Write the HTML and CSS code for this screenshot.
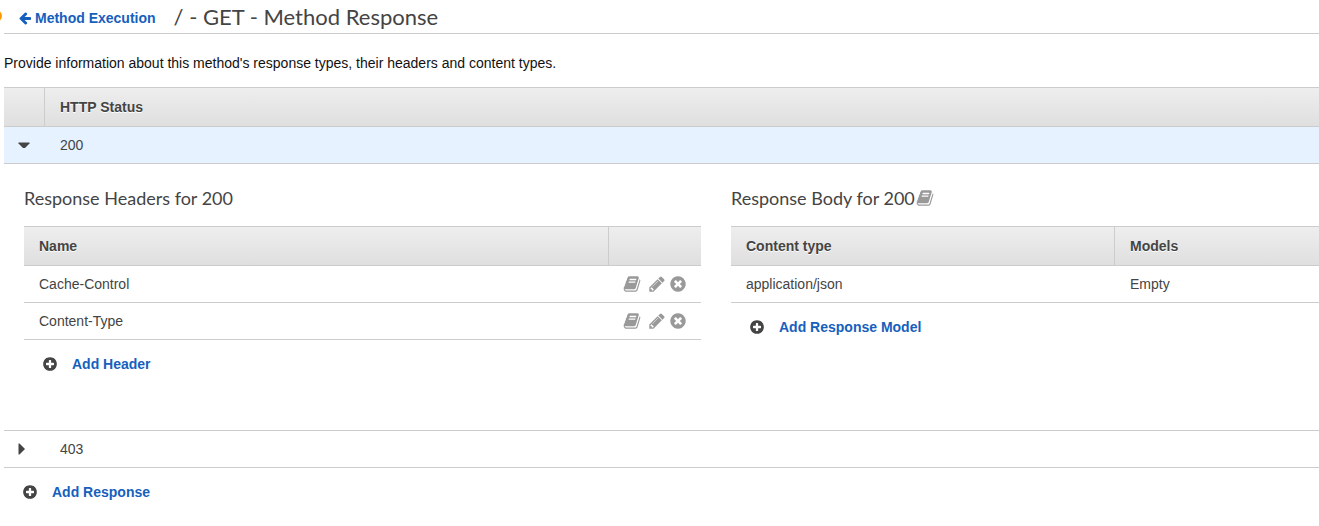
FILE: index.html
```html
<!DOCTYPE html>
<html lang="en">
<head>
<meta charset="utf-8">
<title>Method Response</title>
<link rel="stylesheet" href="styles.css">
</head>
<body>
<svg class="sprite" aria-hidden="true">
  <symbol id="arrow-left" viewBox="0 0 1792 1792"><path d="M1664 896v128q0 53-32.500 90.500t-84.500 37.500h-704l293 294q38 36 38 90t-38 90l-75 76q-37 37-90 37-52 0-91-37l-651-652q-37-37-37-90 0-52 37-91l651-650q38-38 91-38 52 0 90 38l75 74q38 38 38 91t-38 91l-293 293h704q52 0 84.500 37.500t32.500 90.500z"/></symbol>
  <symbol id="plus" viewBox="0 0 1792 1792"><path d="M1344 960v-128q0-26-19-45t-45-19h-256v-256q0-26-19-45t-45-19h-128q-26 0-45 19t-19 45v256h-256q-26 0-45 19t-19 45v128q0 26 19 45t45 19h256v256q0 26 19 45t45 19h128q26 0 45-19t19-45v-256h256q26 0 45-19t19-45zm320-64q0 209-103 385.500t-279.500 279.500-385.500 103-385.500-103-279.500-279.500-103-385.500 103-385.500 279.500-279.500 385.500-103 385.500 103 279.500 279.500 103 385.500z"/></symbol>
  <symbol id="remove" viewBox="0 0 1792 1792"><path d="M1277 1122q0-26-19-45l-181-181 181-181q19-19 19-45 0-27-19-46l-90-90q-19-19-46-19-26 0-45 19l-181 181-181-181q-19-19-45-19-27 0-46 19l-90 90q-19 19-19 46 0 26 19 45l181 181-181 181q-19 19-19 45 0 27 19 46l90 90q19 19 46 19 26 0 45-19l181-181 181 181q19 19 45 19 27 0 46-19l90-90q19-19 19-46zm387-226q0 209-103 385.500t-279.500 279.500-385.500 103-385.500-103-279.500-279.500-103-385.500 103-385.500 279.500-279.500 385.500-103 385.500 103 279.500 279.500 103 385.500z"/></symbol>
  <symbol id="pencil" viewBox="0 0 1792 1792"><path d="M491 1536l91-91-235-235-91 91v107h128v128h107zm523-928q0-22-22-22-10 0-17 7l-542 542q-7 7-7 17 0 22 22 22 10 0 17-7l542-542q7-7 7-17zm-54-192l416 416-832 832h-416v-416zm683 96q0 53-37 90l-166 166-416-416 166-165q36-38 90-38 53 0 91 38l235 234q37 39 37 91z"/></symbol>
  <symbol id="book" viewBox="0 0 1792 1792"><path d="M1703 478q40 57 18 129l-275 906q-19 64-76.500 107.500t-122.500 43.500h-923q-77 0-148.500-53.500t-99.500-131.500q-24-67-2-127 0-4 3-27t4-37q1-8-3-21.500t-3-19.500q2-11 8-21t16.500-23.500 16.500-23.500q23-38 45-91.500t30-91.500q3-10 .5-30t-.5-28q3-11 17-28t17-23q21-36 42-92t25-90q1-9-2.500-32t.5-28q4-13 22-30.500t22-22.500q19-26 42.500-84.500t27.500-96.500q1-8-3-25.500t-2-26.500q2-8 9-18t18-23 17-21q8-12 16.500-30.500t15-35 16-36 19.500-32 26.500-23.500 36-11.500 47.500 5.500l-1 3q38-9 51-9h761q74 0 114 56t18 130l-274 906q-36 119-71.500 153.500t-128.500 34.500h-869q-27 0-38 15-11 16-1 43 24 70 144 70h923q29 0 56-15.500t35-41.500l300-987q7-22 5-57 38 15 59 43zm-1064 2q-4 13 2 22.500t20 9.500h608q13 0 25.500-9.500t16.500-22.500l21-64q4-13-2-22.500t-20-9.500h-608q-13 0-25.500 9.500t-16.500 22.500zm-83 256q-4 13 2 22.500t20 9.500h608q13 0 25.500-9.500t16.500-22.500l21-64q4-13-2-22.500t-20-9.500h-608q-13 0-25.500 9.500t-16.500 22.500z"/></symbol>
  <symbol id="caret-down" viewBox="0 0 12 12"><path d="M.5 3.500h11v1L7 9H5L.5 4.500z"/></symbol>
  <symbol id="caret-right" viewBox="0 0 12 12"><path d="M.5.500h1L6.500 5.500v1L1.500 11.500h-1z"/></symbol>
</svg>

<main class="page">
  <header class="page-header">
    <span class="marker"></span>
    <a class="link back" href="#"><svg class="icon-arrow"><use href="#arrow-left"/></svg>Method Execution</a>
    <h1 class="title">/ - GET - Method Response</h1>
  </header>
  <p class="intro">Provide information about this method's response types, their headers and content types.</p>

  <table class="grid statuses">
    <thead>
      <tr><th class="toggle-col"></th><th>HTTP Status</th></tr>
    </thead>
    <tbody>
      <tr class="selected">
        <td class="toggle-col"><button class="toggle" aria-label="Collapse 200" aria-expanded="true"><svg class="icon-caret"><use href="#caret-down"/></svg></button></td>
        <td>200</td>
      </tr>
      <tr>
        <td class="detail" colspan="2">
          <div class="panels">
            <section>
              <h2 class="subtitle">Response Headers for 200</h2>
              <table class="grid">
                <thead><tr><th>Name</th><th class="actions-col"></th></tr></thead>
                <tbody>
                  <tr>
                    <td>Cache-Control</td>
                    <td class="actions-col"><div class="actions">
                      <button class="action" aria-label="Describe"><svg class="icon"><use href="#book"/></svg></button>
                      <button class="action edit" aria-label="Edit"><svg class="icon"><use href="#pencil"/></svg></button>
                      <button class="action" aria-label="Remove"><svg class="icon"><use href="#remove"/></svg></button>
                    </div></td>
                  </tr>
                  <tr>
                    <td>Content-Type</td>
                    <td class="actions-col"><div class="actions">
                      <button class="action" aria-label="Describe"><svg class="icon"><use href="#book"/></svg></button>
                      <button class="action edit" aria-label="Edit"><svg class="icon"><use href="#pencil"/></svg></button>
                      <button class="action" aria-label="Remove"><svg class="icon"><use href="#remove"/></svg></button>
                    </div></td>
                  </tr>
                </tbody>
              </table>
              <a class="link add" href="#"><svg class="icon-plus"><use href="#plus"/></svg>Add Header</a>
            </section>
            <section>
              <h2 class="subtitle">Response Body for 200 <button class="action" aria-label="Describe body"><svg class="icon"><use href="#book"/></svg></button></h2>
              <table class="grid">
                <thead><tr><th>Content type</th><th class="models-col">Models</th></tr></thead>
                <tbody><tr><td>application/json</td><td class="models-col">Empty</td></tr></tbody>
              </table>
              <a class="link add" href="#"><svg class="icon-plus"><use href="#plus"/></svg>Add Response Model</a>
            </section>
          </div>
        </td>
      </tr>
      <tr>
        <td class="toggle-col"><button class="toggle" aria-label="Expand 403" aria-expanded="false"><svg class="icon-caret"><use href="#caret-right"/></svg></button></td>
        <td>403</td>
      </tr>
    </tbody>
  </table>
  <a class="link add" href="#"><svg class="icon-plus"><use href="#plus"/></svg>Add Response</a>
</main>
</body>
</html>
```

FILE: styles.css
```css
* {
  box-sizing: border-box;
}

body {
  margin: 0;
  background: #fff;
  color: #444;
  font: 14px/20px "Liberation Sans", Arial, sans-serif;
  overflow-x: hidden;
}

.sprite {
  position: absolute;
  width: 0;
  height: 0;
}

svg {
  display: block;
  flex: none;
  fill: currentColor;
}

button {
  display: block;
  padding: 0;
  border: 0;
  background: none;
  color: inherit;
  cursor: pointer;
}

.page {
  padding-left: 4px;
}

.page-header {
  position: relative;
  display: flex;
  align-items: baseline;
  gap: 18px;
  height: 34px;
  padding: 3px 0 0 14px;
  border-bottom: 1px solid #ccc;
}

.marker {
  position: absolute;
  top: 10px;
  left: -14px;
  width: 12px;
  height: 12px;
  border-radius: 50%;
  background: #f90;
}

.title,
.subtitle {
  margin: 0;
  font-family: Lato, sans-serif;
  font-weight: 400;
}

.title {
  font-size: 22px;
  line-height: 28px;
}

.link {
  display: flex;
  align-items: center;
  color: #1660bd;
  font-weight: 700;
  text-decoration: none;
}

.back {
  gap: 3px;
}

.icon-arrow {
  width: 14px;
  height: 14px;
}

.intro {
  margin: 19px 0 14px;
  color: #111;
}

.grid {
  width: 100%;
  border-collapse: separate;
  border-spacing: 0;
  table-layout: fixed;
}

.grid th,
.grid td {
  padding: 8px 15px;
  border-bottom: 1px solid #ccc;
  text-align: left;
}

.grid th {
  height: 40px;
  border-top: 1px solid #ccc;
  background: linear-gradient(#eee, #dfdfdf);
  text-shadow: 0 1px 0 #fff;
}

.grid th + th {
  border-left: 1px solid #ccc;
}

.grid td:not(:first-child) {
  padding-left: 16px;
}

.statuses > tbody > tr > .toggle-col,
.statuses > thead > tr > .toggle-col {
  width: 40px;
  padding: 0 0 0 14px;
}

.selected {
  background: #e6f2ff;
}

.icon-caret {
  width: 12px;
  height: 12px;
}

.statuses > tbody > tr > .detail {
  height: 267px;
  padding: 20px 0 0 20px;
  vertical-align: top;
}

.panels {
  display: grid;
  grid-template-columns: 677fr 588fr;
  gap: 30px;
}

.subtitle {
  display: flex;
  align-items: center;
  gap: 1px;
  margin-bottom: 14px;
  font-size: 18px;
  line-height: 28px;
}

.grid .actions-col {
  width: 93px;
  padding-right: 0;
}

.grid td.actions-col {
  padding-left: 15px;
}

.grid .models-col {
  width: 205px;
}

.actions {
  display: flex;
  align-items: center;
  gap: 3px;
}

.action {
  color: #999;
}

.edit {
  margin-left: 4px;
}

.icon {
  width: 18px;
  height: 18px;
}

.icon-plus {
  width: 16px;
  height: 16px;
  color: #444;
}

.add {
  width: fit-content;
  gap: 14px;
  margin: 14px 0 0 18px;
}
```
